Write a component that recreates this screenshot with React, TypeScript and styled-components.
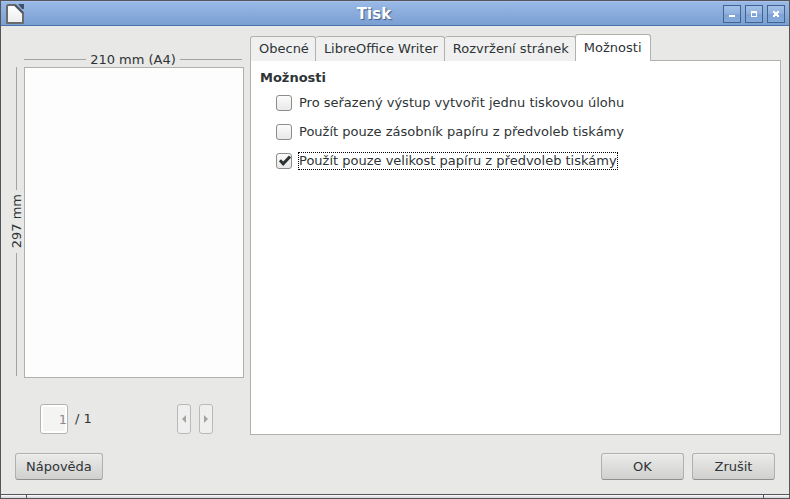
import React, { useState } from 'react';
import styled, { createGlobalStyle, css } from 'styled-components';

const GlobalStyle = createGlobalStyle`
  *, *::before, *::after { box-sizing: border-box; }
  body {
    margin: 0;
    background: #e8e8e6;
    color: #2e3436;
    font-family: 'DejaVu Sans', sans-serif;
    font-size: 13px;
    line-height: 16px;
  }
  button, input { font: inherit; color: inherit; margin: 0; }
`;

const Window = styled.div`
  display: flex;
  flex-direction: column;
  min-height: 100vh;
  border: 1px solid #55555a;
  background: #e8e8e6;
`;

const TitleBar = styled.header`
  display: flex;
  align-items: center;
  height: 25px;
  padding: 0 4px 0 5px;
  border-top: 1px solid #a6c2ec;
  border-bottom: 1px solid #4a74ab;
  background: linear-gradient(#99b9e6, #7a9fd2);
`;

const Title = styled.h1`
  flex: 1;
  margin: 0;
  color: #fff;
  font-size: 15px;
  font-weight: 700;
  line-height: 20px;
  text-align: center;
  text-shadow: 1px 1px 1px #3d5c88;
`;

const WindowButtons = styled.div`
  display: flex;
  gap: 4px;
`;

const WindowButton = styled.button`
  display: flex;
  width: 18px;
  height: 18px;
  padding: 0;
  border: 1px solid #41658f;
  background: linear-gradient(#a3c0e9 0, #8fb0de 50%, #7fa3d6 50%, #84a9da 100%);

  svg { display: block; }
`;

const Main = styled.main`
  flex: 1;
  display: grid;
  grid-template-columns: minmax(0, 234fr) minmax(0, 531fr);
  column-gap: 6px;
  padding: 8px 8px 0 9px;
`;

const Preview = styled.section`
  display: grid;
  grid-template-columns: 14px minmax(0, 1fr);
  grid-template-rows: auto auto auto;
  align-content: start;
  padding-top: 17px;
`;

const Ruler = styled.div<{ $vertical?: boolean }>`
  display: flex;
  align-items: center;
  gap: 4px;
  white-space: nowrap;

  &::before, &::after {
    content: '';
    flex: 1;
    background: #a3a3a1;
  }

  ${({ $vertical }) =>
    $vertical
      ? css`
          flex-direction: column;
          width: 13px;
          padding-bottom: 2px;
          &::before, &::after { width: 1px; }
          span {
            writing-mode: vertical-rl;
            transform: rotate(180deg);
            line-height: 13px;
          }
        `
      : css`
          grid-column: 2;
          height: 16px;
          padding-right: 2px;
          span { padding-top: 2px; }
          &::before, &::after { height: 1px; }
        `}
`;

const Paper = styled.div`
  aspect-ratio: 210 / 297;
  border: 1px solid #b0b0ae;
  background: #fdfdfd;
`;

const Pager = styled.div`
  grid-column: 2;
  display: flex;
  align-items: center;
  padding: 26px 31px 0 16px;
`;

const PageInput = styled.input`
  width: 28px;
  height: 30px;
  margin-right: 7px;
  padding: 0;
  border: 1px solid #b5b5b0;
  border-radius: 3px;
  background: #f4f4f2;
  box-shadow: inset 0 0 0 2px #fff;
  color: #8c8c8a;
  text-align: right;
`;

const PagerArrows = styled.div`
  display: flex;
  gap: 8px;
  margin-left: auto;
`;

const ArrowButton = styled.button`
  display: flex;
  align-items: center;
  justify-content: center;
  width: 14px;
  height: 30px;
  padding: 0;
  border: 1px solid #b9b9b5;
  border-radius: 3px;
  background: #efefef;
`;

const Notebook = styled.section`
  display: flex;
  flex-direction: column;
`;

const TabList = styled.div`
  position: relative;
  display: flex;
  align-items: flex-end;
  height: 27px;
  margin-bottom: -1px;
`;

const Tab = styled.button<{ $active: boolean }>`
  height: 25px;
  padding: 0 6px 0 8px;
  border: 1px solid #b2b2ad;
  border-width: 1px 1px 0 0;
  border-radius: 3px 3px 0 0;
  background: #f0f0f0;
  white-space: nowrap;

  &:first-child { border-left-width: 1px; }

  ${({ $active }) =>
    $active &&
    css`
      height: 27px;
      padding: 0 8px;
      border-left-width: 1px;
      background: #fff;
      &:not(:first-child) { margin-left: -1px; }
    `}
`;

const TabPanel = styled.div`
  flex: 1;
  padding: 9px;
  border: 1px solid #b2b2ad;
  background: #fff;
`;

const Heading = styled.h2`
  margin: 0 0 8px;
  font-size: 13px;
  line-height: 16px;
`;

const Option = styled.label`
  display: flex;
  align-items: center;
  gap: 6px;
  width: fit-content;
  margin: 0 0 11px 16px;
`;

const CheckBox = styled.input`
  appearance: none;
  flex: none;
  width: 16px;
  height: 16px;
  border: 1px solid #8d8d88;
  border-radius: 3px;
  background: linear-gradient(#fbfbfb, #e9e9e9);
  outline: 0;

  &:checked {
    background:
      url("data:image/svg+xml,%3Csvg xmlns='http://www.w3.org/2000/svg' viewBox='0 0 14 14'%3E%3Cpath d='M3 6.2l3.2 3.5L13 2.6' fill='none' stroke='%232e3436' stroke-width='3'/%3E%3C/svg%3E"),
      linear-gradient(#fbfbfb, #e9e9e9);
  }
`;

const OptionText = styled.span<{ $focused: boolean }>`
  padding: 0 1px;
  line-height: 18px;
  outline: ${({ $focused }) => ($focused ? '1px dotted #000' : '0')};
  outline-offset: -1px;
`;

const Footer = styled.footer`
  display: flex;
  gap: 8px;
  padding: 18px 14px 14px;
`;

const Button = styled.button<{ $start?: boolean }>`
  min-width: 83px;
  height: 27px;
  padding: 0 10px;
  margin-right: ${({ $start }) => ($start ? 'auto' : '0')};
  border: 1px solid #b0b0ad;
  border-bottom-color: #90908d;
  border-radius: 3px;
  background: linear-gradient(#ebebea, #d0d0cf);
  box-shadow: inset 0 1px 0 #f1f1f0;
`;

const ResizeBar = styled.div`
  display: grid;
  grid-template-columns: 25px 1fr 26px;
  height: 4px;
  border-top: 1px solid #55555a;
`;

const ResizeGrip = styled.div`
  background: linear-gradient(#fff, #cfd0d8);
  & + & { border-left: 1px solid #55555a; }
`;

const options = [
  'Pro seřazený výstup vytvořit jednu tiskovou úlohu',
  'Použít pouze zásobník papíru z předvoleb tiskámy',
  'Použít pouze velikost papíru z předvoleb tiskámy',
];
const tabs = ['Obecné', 'LibreOffice Writer', 'Rozvržení stránek', 'Možnosti'];

function DocumentIcon() {
  return (
    <svg width="19" height="20" viewBox="0 0 19 20" aria-hidden="true">
      <defs>
        <linearGradient id="sheet" x2="0" y2="1">
          <stop stopColor="#fff" />
          <stop offset="1" stopColor="#ececec" />
        </linearGradient>
      </defs>
      <path d="M2 1h7l8 8v10H1V2z" fill="url(#sheet)" stroke="#6b6b6b" strokeWidth="2" strokeLinejoin="round" />
      <path d="M9 1l8 8" stroke="#4d5663" strokeWidth="2" />
      <path d="M12 0h6v5h-2z" fill="#41516a" />
    </svg>
  );
}

export default function App() {
  const [active, setActive] = useState(3);
  const [checked, setChecked] = useState([false, false, true]);
  const [focused, setFocused] = useState(2);

  const toggle = (index: number) => {
    setFocused(index);
    setChecked(checked.map((value, i) => (i === index ? !value : value)));
  };

  return (
    <Window>
      <GlobalStyle />
      <TitleBar>
        <DocumentIcon />
        <Title>Tisk</Title>
        <WindowButtons>
          <WindowButton aria-label="Minimalizovat">
            <svg width="16" height="16"><path d="M5 9h6v2H5z" fill="#fff" /></svg>
          </WindowButton>
          <WindowButton aria-label="Maximalizovat">
            <svg width="16" height="16"><path d="M5 5h6v6H5zM6 7v3h4V7z" fill="#fff" fillRule="evenodd" /></svg>
          </WindowButton>
          <WindowButton aria-label="Zavřít">
            <svg width="16" height="16">
              <path d="M5 5h2v1h2V5h2v2h-1v2h1v2H9v-1H7v1H5V9h1V7H5z" fill="#fff" />
            </svg>
          </WindowButton>
        </WindowButtons>
      </TitleBar>

      <Main>
        <Preview>
          <Ruler><span>210 mm (A4)</span></Ruler>
          <Ruler $vertical><span>297 mm</span></Ruler>
          <Paper />
          <Pager>
            <PageInput aria-label="Stránka" defaultValue="1" disabled />
            <span>/ 1</span>
            <PagerArrows>
              <ArrowButton aria-label="Předchozí stránka" disabled>
                <svg width="4" height="8"><path d="M4 0v8L0 4z" fill="#a3a3a1" /></svg>
              </ArrowButton>
              <ArrowButton aria-label="Další stránka" disabled>
                <svg width="4" height="8"><path d="M0 0v8l4-4z" fill="#a3a3a1" /></svg>
              </ArrowButton>
            </PagerArrows>
          </Pager>
        </Preview>

        <Notebook>
          <TabList role="tablist">
            {tabs.map((tab, i) => (
              <Tab key={tab} role="tab" aria-selected={i === active} $active={i === active} onClick={() => setActive(i)}>
                {tab}
              </Tab>
            ))}
          </TabList>
          <TabPanel role="tabpanel">
            <Heading>{tabs[active]}</Heading>
            {active === 3 &&
              options.map((text, i) => (
                <Option key={text}>
                  <CheckBox type="checkbox" checked={checked[i]} onChange={() => toggle(i)} />
                  <OptionText $focused={i === focused}>{text}</OptionText>
                </Option>
              ))}
          </TabPanel>
        </Notebook>
      </Main>

      <Footer>
        <Button $start>Nápověda</Button>
        <Button>OK</Button>
        <Button>Zrušit</Button>
      </Footer>
      <ResizeBar>
        <ResizeGrip />
        <ResizeGrip />
        <ResizeGrip />
      </ResizeBar>
    </Window>
  );
}
